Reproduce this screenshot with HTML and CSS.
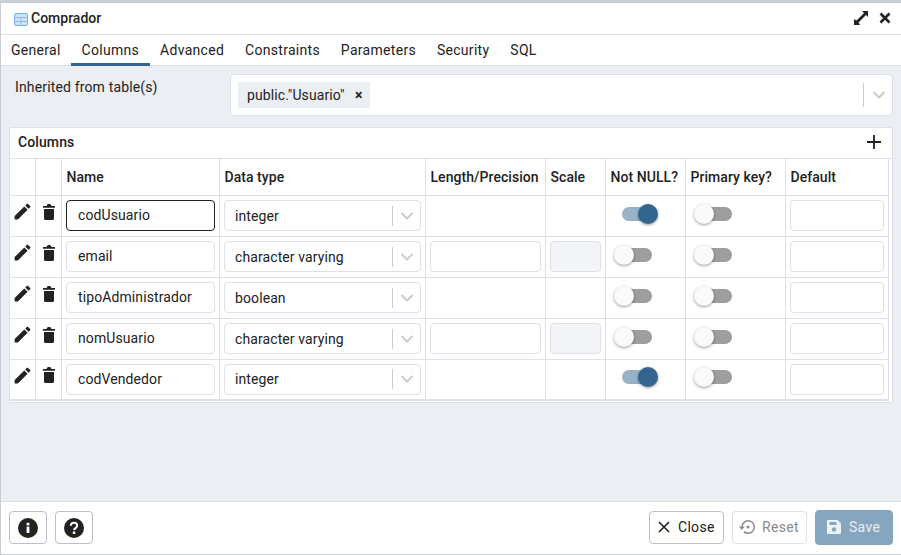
FILE: index.html
```html
<!DOCTYPE html>
<html lang="en">
<head>
    <meta charset="UTF-8">
    <meta name="viewport" content="width=device-width, initial-scale=1.0">
    <title>Comprador</title>
    <link rel="stylesheet" href="styles.css">
</head>
<body>
    <svg class="icon-defs" width="0" height="0">
        <symbol id="i-edit" viewBox="0 0 24 24"><path d="M3 17.25V21h3.75L17.81 9.94l-3.75-3.75L3 17.25zM20.71 7.04a1 1 0 0 0 0-1.41l-2.34-2.34a1 1 0 0 0-1.41 0l-1.83 1.83 3.75 3.75 1.83-1.83z"/></symbol>
        <symbol id="i-trash" viewBox="0 0 12 16"><path d="M1 5h10v9.500A1.500 1.500 0 0 1 9.500 16h-7A1.500 1.500 0 0 1 1 14.500V5zM0 2h3.500l.6-1.200A1.500 1.500 0 0 1 5.300 0h1.400a1.500 1.500 0 0 1 1.200.8L8.500 2H12v1.700H0V2z"/></symbol>
        <symbol id="i-chevron" viewBox="0 0 14 8"><path d="M1.500 1 7 6.500 12.500 1" fill="none" stroke="#ccc" stroke-width="2"/></symbol>
    </svg>

    <div class="dialog">
        <header class="title-bar">
            <svg class="table-icon" width="14" height="13" viewBox="0 0 14 13">
                <rect x=".5" y=".5" width="13" height="12" rx="1.500" fill="#cfe3f5" stroke="#6fb0e6"/>
                <path d="M.5 4.500h13M.5 8.500h13M7 4.500v8" stroke="#8fbfe8" fill="none"/>
            </svg>
            <span class="title">Comprador</span>
            <span class="title-actions">
                <svg width="14" height="14" viewBox="0 0 14 14"><path d="M8 0H14V6L12 4 4.500 11.500 6 14H0V8L2.500 9.500 10 2z" fill="#222"/></svg>
                <svg width="12" height="12" viewBox="0 0 12 12"><path d="M1.500 1.500l9 9M10.500 1.500l-9 9" stroke="#222" stroke-width="2.600" fill="none"/></svg>
            </span>
        </header>

        <nav class="tabs">
            <a>General</a>
            <a class="active">Columns</a>
            <a>Advanced</a>
            <a>Constraints</a>
            <a>Parameters</a>
            <a>Security</a>
            <a>SQL</a>
        </nav>

        <main class="content">
            <div class="form-row">
                <label>Inherited from table(s)</label>
                <div class="multi-select">
                    <span class="chip">public."Usuario" <b>×</b></span>
                    <span class="sel-arrow"><svg width="14" height="8"><use href="#i-chevron"/></svg></span>
                </div>
            </div>

            <section class="card">
                <div class="card-head">
                    <span>Columns</span>
                    <svg width="14" height="14" viewBox="0 0 14 14"><path d="M7 0v14M0 7h14" stroke="#222" stroke-width="1.800"/></svg>
                </div>
                <table>
                    <colgroup>
                        <col class="c-edit"><col class="c-icon"><col class="c-name"><col class="c-type">
                        <col class="c-len"><col class="c-scale"><col class="c-null"><col class="c-pk"><col class="c-def">
                    </colgroup>
                    <thead>
                        <tr><th></th><th></th><th>Name</th><th>Data type</th><th>Length/Precision</th><th>Scale</th><th>Not NULL?</th><th>Primary key?</th><th>Default</th></tr>
                    </thead>
                    <tbody id="rows"></tbody>
                </table>
            </section>
        </main>

        <footer class="footer">
            <div class="btn-group">
                <button class="btn btn-icon"><svg width="20" height="20" viewBox="0 0 20 20"><circle cx="10" cy="10" r="10" fill="#222"/><rect x="8.600" y="8.600" width="2.800" height="6.400" fill="#fff"/><rect x="8.600" y="4.800" width="2.800" height="2.600" fill="#fff"/></svg></button>
                <button class="btn btn-icon"><svg width="20" height="20" viewBox="0 0 20 20"><circle cx="10" cy="10" r="10" fill="#222"/><path d="M6.800 7.800c0-2 1.400-3.100 3.200-3.100s3.200 1.100 3.200 2.900c0 2.500-3.100 2.400-3.100 4.500" fill="none" stroke="#fff" stroke-width="2"/><rect x="8.800" y="13.500" width="2.500" height="2.400" fill="#fff"/></svg></button>
            </div>
            <div class="btn-group">
                <button class="btn btn-close"><svg width="14" height="14" viewBox="0 0 14 14"><path d="M2 2l10 10M12 2L2 12" stroke="#222" stroke-width="1.600" fill="none"/></svg>Close</button>
                <button class="btn btn-disabled"><svg width="18" height="16" viewBox="0 0 18 16"><path d="M4 8a6.200 6.200 0 1 1 2 4.600" fill="none" stroke="#8a8a8a" stroke-width="1.500"/><path d="M0.800 7.500h6L3.800 11z" fill="#8a8a8a"/><circle cx="10" cy="8" r="1.500" fill="#8a8a8a"/></svg>Reset</button>
                <button class="btn btn-primary"><svg width="16" height="16" viewBox="0 0 16 16"><path d="M2 1h9.500L15 4.500V14a1 1 0 0 1-1 1H2a1 1 0 0 1-1-1V2a1 1 0 0 1 1-1z" fill="#fff" opacity=".85"/><rect x="3.500" y="3" width="7" height="3" fill="#86a5bf"/><circle cx="8" cy="10.500" r="2.200" fill="#86a5bf"/></svg>Save</button>
            </div>
        </footer>
    </div>

    <script src="rows.js"></script>
</body>
</html>
```

FILE: rows.js
```js
// columnas de la tabla
const columns = [
    { name: 'codUsuario', type: 'integer', notNull: true, focused: true },
    { name: 'email', type: 'character varying', sized: true },
    { name: 'tipoAdministrador', type: 'boolean' },
    { name: 'nomUsuario', type: 'character varying', sized: true },
    { name: 'codVendedor', type: 'integer', notNull: true }
];

function toggle(on) {
    return `<span class="toggle ${on ? 'on' : ''}"><i></i></span>`;
}

document.getElementById('rows').innerHTML = columns.map(col => `
    <tr>
        <td class="cell-icon"><svg width="21" height="21"><use href="#i-edit"/></svg></td>
        <td class="cell-icon"><svg class="trash" width="12" height="16"><use href="#i-trash"/></svg></td>
        <td><div class="input name ${col.focused ? 'focused' : ''}">${col.name}</div></td>
        <td>
            <div class="input select">
                <span>${col.type}</span>
                <span class="sel-arrow"><svg width="14" height="8"><use href="#i-chevron"/></svg></span>
            </div>
        </td>
        <td>${col.sized ? '<div class="input"></div>' : ''}</td>
        <td>${col.sized ? '<div class="input disabled"></div>' : ''}</td>
        <td class="cell-toggle">${toggle(col.notNull)}</td>
        <td class="cell-toggle">${toggle(false)}</td>
        <td><div class="input"></div></td>
    </tr>`).join('');
```

FILE: styles.css
```css
* {
    box-sizing: border-box;
}
html, body {
    height: 100%;
}
body {
    margin: 0;
    font-family: Roboto, "Liberation Sans", sans-serif;
    font-size: 14px;
    color: #222;
    background-color: #c9ced6;
    overflow: hidden;
}
.icon-defs {
    position: absolute;
}
.dialog {
    height: 551px;
    margin: 3px 0 1px 1px;
    display: flex;
    flex-direction: column;
    background-color: #ebeef3;
}

/* title */
.title-bar {
    height: 32px;
    flex: none;
    display: flex;
    align-items: center;
    padding: 0 10px 2px 13px;
    background-color: #fff;
    border-bottom: 1px solid #dde0e6;
}
.table-icon {
    margin-right: 3px;
    margin-top: 3px;
}
.title {
    font-weight: 500;
}
.title-actions {
    margin-left: auto;
    display: flex;
    align-items: center;
    gap: 11px;
}

/* tabs */
.tabs {
    height: 31px;
    flex: none;
    display: flex;
    background-color: #fff;
    border-bottom: 1px solid #dde0e6;
}
.tabs a {
    padding: 0 10.45px;
    line-height: 30px;
    letter-spacing: .3px;
    height: 31px;
}
.tabs a:first-child {
    padding-left: 10px;
}
.tabs a.active {
    border-bottom: 3px solid #326690;
}

.content {
    flex: 1;
    padding: 8px 8px 0;
}
.form-row {
    display: flex;
    align-items: flex-start;
}
.form-row label {
    width: 221px;
    padding: 5px 0 0 6px;
    line-height: 16px;
    letter-spacing: .15px;
}
.multi-select {
    flex: 1;
    height: 42px;
    display: flex;
    align-items: center;
    padding: 0 6px 0 7px;
    background-color: #fff;
    border: 1px solid #dde0e6;
    border-radius: 4px;
}
.chip {
    height: 26px;
    line-height: 26px;
    padding: 0 7px 0 9px;
    letter-spacing: .1px;
    background-color: #ebeef3;
    border-radius: 2px;
}
.chip b {
    margin-left: 7px;
}
.sel-arrow {
    margin-left: auto;
    display: flex;
    align-items: center;
    height: 24px;
    padding-left: 8px;
    border-left: 1px solid #ccc;
}

/* columns card */
.card {
    margin-top: 11px;
    height: 276px;
    background-color: #fff;
    border: 1px solid #dde0e6;
    border-radius: 2px;
}
.card-head {
    height: 31px;
    display: flex;
    align-items: center;
    justify-content: space-between;
    padding: 0 11px 2px 8px;
    font-weight: 500;
    letter-spacing: .1px;
    border-bottom: 1px solid #dde0e6;
}
table {
    width: 878px;
    table-layout: fixed;
    border-collapse: collapse;
}
.c-edit { width: 25px; }
.c-icon { width: 26px; }
.c-name { width: 158px; }
.c-type { width: 206px; }
.c-len { width: 120px; }
.c-scale { width: 60px; }
.c-null { width: 80px; }
.c-pk { width: 100px; }
.c-def { width: 103px; }
th, td {
    padding: 0 4px;
    border: 1px solid #dde0e6;
    border-top: none;
    text-align: left;
}
th:first-child, td:first-child {
    border-left: none;
}
th {
    height: 36px;
    padding-left: 5px;
    font-weight: 500;
    letter-spacing: .05px;
}
td {
    height: 41px;
}
tbody tr:last-child td {
    border-bottom-width: 2px;
}
.cell-icon {
    padding: 0;
    text-align: center;
}
.cell-icon svg {
    display: block;
    margin: -8px auto 0;
    fill: #222;
}
.cell-icon .trash {
    position: relative;
    left: 1px;
}
.input {
    height: 31px;
    background-color: #fff;
    border: 1px solid #dde0e6;
    border-radius: 4px;
}
.name {
    padding: 0 11.5px;
    line-height: 29px;
    letter-spacing: .1px;
}
.focused {
    border-color: #222;
}
.select {
    display: flex;
    align-items: center;
    padding: 0 6px 0 10.5px;
    letter-spacing: .1px;
}
.select .sel-arrow {
    height: 20px;
    padding-left: 7px;
}
.disabled {
    background-color: #f3f4f8;
}

/* switches */
.cell-toggle {
    padding-left: 8px;
}
.toggle {
    position: relative;
    display: block;
    width: 30px;
    height: 14px;
    margin: -4px 0 0 8px;
    border-radius: 7px;
    background-color: #9e9e9e;
}
.toggle i {
    position: absolute;
    top: -3px;
    left: -8px;
    width: 20px;
    height: 20px;
    border-radius: 50%;
    background-color: #fafafa;
    box-shadow: 0 1px 3px rgba(0, 0, 0, .4);
}
.toggle.on {
    background-color: #98b3c8;
}
.toggle.on i {
    left: 16px;
    background-color: #326690;
}

/* footer */
.footer {
    height: 53px;
    flex: none;
    display: flex;
    justify-content: space-between;
    align-items: center;
    padding: 0 8px 1px;
    background-color: #fff;
    border-top: 1px solid #dde0e6;
}
.btn-group {
    display: flex;
    gap: 8px;
}
.btn {
    width: 75px;
    height: 33px;
    display: flex;
    align-items: center;
    gap: 6px;
    padding: 0 0 0 5px;
    font: inherit;
    letter-spacing: .3px;
    color: #222;
    background-color: #fff;
    border: 1px solid #bac1cd;
    border-radius: 4px;
}
.btn-icon {
    width: 38px;
    justify-content: center;
    padding: 0;
}
.btn-close {
    padding-left: 7px;
    gap: 7px;
}
.btn-disabled {
    color: #8a8a8a;
    border-color: #dde0e6;
}
.btn-primary {
    width: 78px;
    height: 35px;
    margin-top: -1px;
    padding-left: 10px;
    gap: 7px;
    color: #e8eef3;
    background-color: #86a5bf;
    border-color: #86a5bf;
}
```
